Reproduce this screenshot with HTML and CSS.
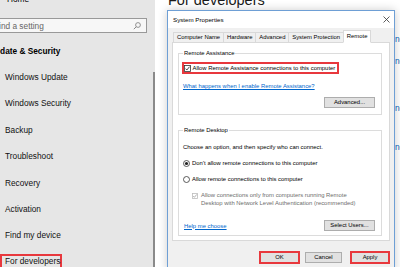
FILE: index.html
```html
<!DOCTYPE html>
<html lang="en">
<head>
<meta charset="utf-8">
<title>Settings - For developers</title>
<link rel="stylesheet" href="styles.css">
</head>
<body>
<div class="screen">
  <nav class="nav">
    <div class="nav-body">
      <div class="home">Home</div>
      <div class="search">
        <span class="search-text">Find a setting</span>
        <svg class="search-icon" width="8" height="8" viewBox="0 0 8 8"><circle cx="5" cy="3" r="2.4" fill="none" stroke="#7a7a7a" stroke-width="0.8"/><line x1="3.2" y1="4.8" x2="0.8" y2="7.2" stroke="#7a7a7a" stroke-width="0.9"/></svg>
      </div>
      <div class="nav-header">Update &amp; Security</div>
      <ul class="nav-list">
        <li class="nav-item"><span>Windows Update</span></li>
        <li class="nav-item"><span>Windows Security</span></li>
        <li class="nav-item"><span>Backup</span></li>
        <li class="nav-item"><span>Troubleshoot</span></li>
        <li class="nav-item"><span>Recovery</span></li>
        <li class="nav-item"><span>Activation</span></li>
        <li class="nav-item"><span>Find my device</span></li>
        <li class="nav-item"><span class="mark-nav">For developers</span></li>
      </ul>
    </div>
    <div class="scroll-thumb"></div>
  </nav>

  <main class="page">
    <h1 class="page-title">For developers</h1>
    <div class="page-links">
      <a class="page-link l1">network options</a>
      <a class="page-link l2">not configured</a>
      <a class="page-link l3">network settings</a>
      <a class="page-link l4">notifications</a>
    </div>
  </main>

  <section class="dialog">
    <header class="titlebar">
      <span class="title">System Properties</span>
      <svg class="close" width="7" height="7" viewBox="0 0 7 7"><line x1="0.5" y1="0.5" x2="6.5" y2="6.5" stroke="#333" stroke-width="0.8"/><line x1="6.5" y1="0.5" x2="0.5" y2="6.5" stroke="#333" stroke-width="0.8"/></svg>
    </header>
    <div class="dialog-body">
      <div class="tabs">
        <span class="tab">Computer Name</span>
        <span class="tab">Hardware</span>
        <span class="tab">Advanced</span>
        <span class="tab">System Protection</span>
        <span class="tab tab-active">Remote</span>
      </div>
      <div class="panel">
        <fieldset class="group">
          <legend class="legend">Remote Assistance</legend>
          <div class="check-wrap">
            <label class="check-row mark">
              <svg class="box" width="7" height="7" viewBox="0 0 7 7"><rect x="0.5" y="0.5" width="6" height="6" fill="#fff" stroke="#333" stroke-width="0.8"/><polyline points="1.5,3.6 2.9,5 5.5,1.7" fill="none" stroke="#222" stroke-width="0.8"/></svg>
              <span>Allow Remote Assistance connections to this computer</span>
            </label>
          </div>
          <a class="link link-1">What happens when I enable Remote Assistance?</a>
          <div class="btn-row btn-row-1">
            <button class="btn btn-wide">Advanced...</button>
          </div>
        </fieldset>

        <fieldset class="group group-2">
          <legend class="legend">Remote Desktop</legend>
          <p class="hint">Choose an option, and then specify who can connect.</p>
          <label class="radio-row radio-1">
            <svg width="7" height="7" viewBox="0 0 7 7"><circle cx="3.5" cy="3.5" r="3" fill="#fff" stroke="#333" stroke-width="0.8"/><circle cx="3.5" cy="3.5" r="1.6" fill="#222"/></svg>
            <span>Don’t allow remote connections to this computer</span>
          </label>
          <label class="radio-row radio-2">
            <svg width="7" height="7" viewBox="0 0 7 7"><circle cx="3.5" cy="3.5" r="3" fill="#fff" stroke="#333" stroke-width="0.8"/></svg>
            <span>Allow remote connections to this computer</span>
          </label>
          <label class="nla-row">
            <svg class="nla-box" width="6" height="6" viewBox="0 0 6 6"><rect x="0.5" y="0.5" width="5" height="5" fill="#fff" stroke="#bcbcbc" stroke-width="0.8"/><polyline points="1.2,3 2.4,4.3 4.8,1.4" fill="none" stroke="#a0a0a0" stroke-width="0.8"/></svg>
            <span>Allow connections only from computers running Remote<br>Desktop with Network Level Authentication (recommended)</span>
          </label>
          <div class="group-foot">
            <a class="link link-2">Help me choose</a>
            <button class="btn btn-wide">Select Users...</button>
          </div>
        </fieldset>
      </div>
      <div class="actions">
        <button class="btn btn-act btn-marked btn-ok">OK</button>
        <button class="btn btn-act btn-cancel">Cancel</button>
        <button class="btn btn-act btn-marked btn-apply">Apply</button>
      </div>
    </div>
  </section>
</div>
</body>
</html>
```

FILE: styles.css
```css
* { box-sizing: border-box; }

html, body {
  margin: 0;
  padding: 0;
  background: #fff;
}

.screen {
  position: relative;
  width: 400px;
  height: 267px;
  overflow: hidden;
  display: flex;
  font-family: "Liberation Sans", Arial, sans-serif;
}

/* ---------- left navigation ---------- */
.nav {
  width: 155px;
  height: 267px;
  background: #e6e6e6;
  display: flex;
  flex-shrink: 0;
}

.nav-body {
  flex: 1;
  font-size: 8.3px;
  color: #000;
  overflow: hidden;
}

.home {
  margin-top: -7px;
  height: 12px;
  line-height: 12px;
  padding-left: 7px;
}

.search {
  margin-top: 13px;
  margin-left: -20px;
  width: 167px;
  height: 15px;
  border: 1px solid #999;
  background: #f7f7f7;
  display: flex;
  align-items: center;
  justify-content: space-between;
  padding: 0 5px 0 13px;
  color: #666;
}

.search-icon { display: block; }

.nav-header {
  margin-top: 12px;
  margin-left: -11px;
  height: 12px;
  line-height: 12px;
  font-weight: bold;
  white-space: nowrap;
}

.nav-list {
  list-style: none;
  margin: 6.8px 0 0;
  padding: 0;
}

.nav-item {
  height: 26.4px;
  display: flex;
  align-items: center;
  padding-left: 5px;
  white-space: nowrap;
  color: #111;
}

.mark-nav {
  margin-left: -5px;
  padding: 0 0 0 3px;
  line-height: 11px;
  border: 2px solid #e8383d;
}

.scroll-thumb {
  width: 2px;
  margin-top: 72px;
  background: #8a8a8a;
}

/* ---------- page behind the dialog ---------- */
.page {
  flex: 1;
  background: #fff;
  min-width: 0;
}

.page-title {
  margin: -8px 0 0 13px;
  font-size: 14.5px;
  line-height: 16px;
  font-weight: normal;
  color: #1a1a1a;
  white-space: nowrap;
}

.page-links {
  display: flex;
  flex-direction: column;
  padding-left: 240px;
  font-size: 8.3px;
  line-height: 10px;
}

.page-link {
  color: #0067c0;
  white-space: nowrap;
}
.l1 { margin-top: 26px; }
.l2 { margin-top: 12px; }
.l3 { margin-top: 37px; }
.l4 { margin-top: 29px; }

/* ---------- dialog window ---------- */
.dialog {
  position: absolute;
  left: 167px;
  top: 10px;
  width: 228px;
  height: 262px;
  border: 1px solid #6e9fd5;
  background: #f0f0f0;
  box-shadow: 0 0 9px rgba(0, 0, 0, 0.2);
  font-size: 5.9px;
  color: #000;
  display: flex;
  flex-direction: column;
}

.titlebar {
  height: 17px;
  background: #fff;
  display: flex;
  align-items: center;
  justify-content: space-between;
  padding: 0 4px 0 5px;
}

.title { font-size: 6.2px; }
.close { display: block; }

.dialog-body {
  padding: 0 4px;
  display: flex;
  flex-direction: column;
}

.tabs {
  display: flex;
  align-items: flex-end;
  height: 13px;
  margin: 2px 0 -1px;
  padding-left: 1px;
}

.tab {
  height: 11px;
  line-height: 9px;
  padding: 0 2.9px;
  border: 1px solid #d9d9d9;
  background: #f0f0f0;
  margin-right: -1px;
  white-space: nowrap;
}

.tab-active {
  position: relative;
  z-index: 1;
  height: 13px;
  line-height: 11px;
  background: #fff;
  border-bottom-color: #fff;
}

.panel {
  background: #fff;
  border: 1px solid #d9d9d9;
  padding: 6px 7px 4px 5px;
}

.group {
  margin: 0;
  min-width: 0;
  border: 1px solid #dcdcdc;
  padding: 0 6px 6px 3px;
}

.group-2 {
  margin-top: 11px;
  padding-bottom: 4px;
}

.legend {
  padding: 0 1px;
  margin-left: 1px;
  line-height: 8px;
}

.check-wrap { margin-top: 5px; }

.check-row {
  display: inline-flex;
  align-items: center;
  gap: 1.5px;
  line-height: 8px;
  padding-right: 1.5px;
}

.mark { border: 2px solid #e8383d; }

.box { display: block; }

.link {
  display: block;
  color: #0066cc;
  text-decoration: underline;
  line-height: 8px;
  white-space: nowrap;
}

.link-1 {
  margin: 8px 0 0 1px;
}

.btn-row {
  display: flex;
  justify-content: flex-end;
}

.btn-row-1 { margin-top: 7px; }

.btn {
  font-family: inherit;
  font-size: 5.9px;
  color: #000;
  background: #e1e1e1;
  border: 1px solid #adadad;
  padding: 0;
  margin: 0;
  height: 11px;
  line-height: 9px;
  white-space: nowrap;
}

.btn-wide { width: 51px; }

.hint {
  margin: 9px 0 0 1px;
  line-height: 8px;
}

.radio-row {
  display: flex;
  align-items: center;
  gap: 2px;
  margin-left: 1px;
  line-height: 8px;
}

.radio-row svg { display: block; }

.radio-1, .radio-2 { margin-top: 8px; }

.nla-row {
  display: flex;
  align-items: flex-start;
  gap: 3px;
  margin: 8px 0 0 10px;
  line-height: 8px;
  color: #6d6d6d;
}

.nla-box {
  display: block;
  margin-top: 1.5px;
}

.group-foot {
  margin-top: 13px;
  display: flex;
  align-items: center;
  justify-content: space-between;
}

.link-2 { margin-left: 2px; }

.actions {
  display: flex;
  align-items: center;
  justify-content: flex-end;
  margin-top: 10px;
  height: 13px;
}

.btn-act { width: 37px; }

.btn-marked {
  border: 2px solid #e8383d;
  height: 13px;
  line-height: 9px;
}

.btn-ok { width: 41px; }
.btn-cancel { margin-left: 5px; }
.btn-apply { width: 40px; margin-left: 8px; }
```
